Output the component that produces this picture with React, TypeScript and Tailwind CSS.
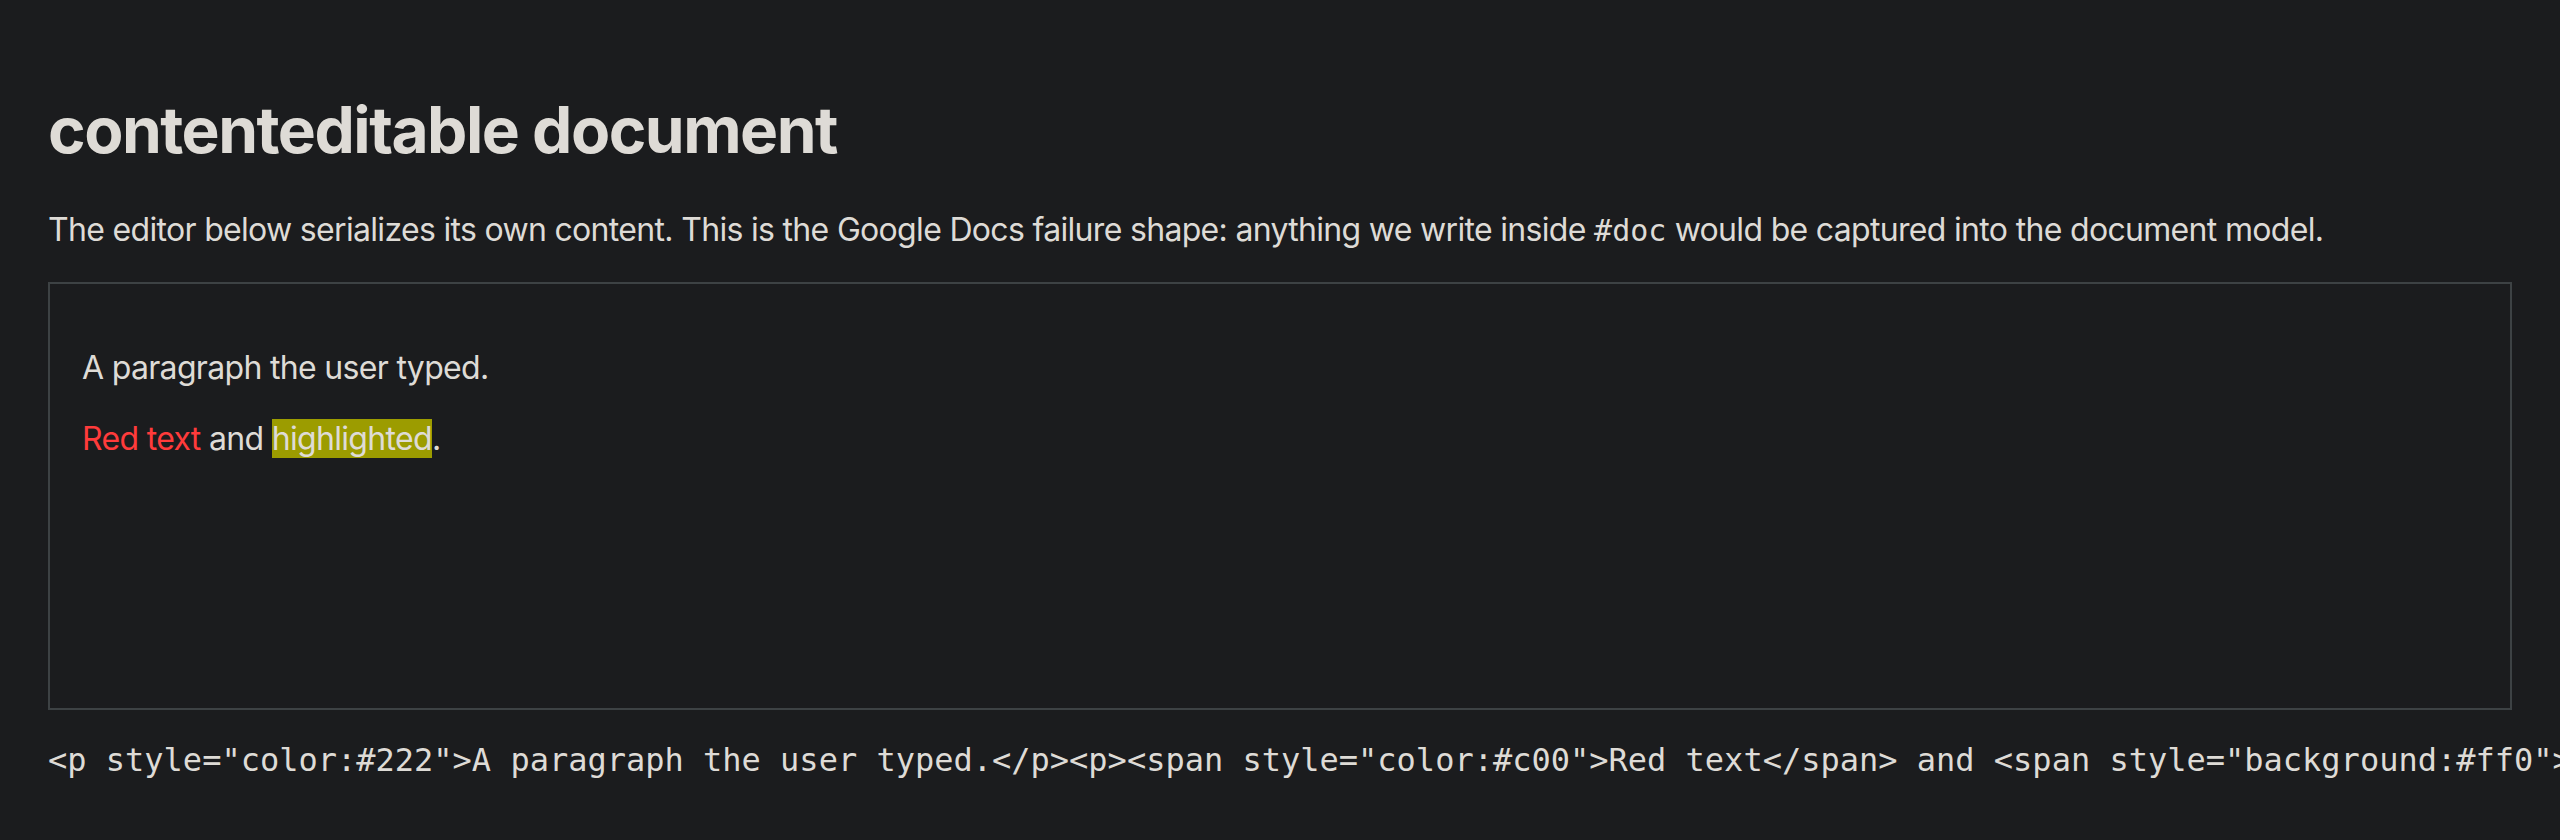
import React from "react";

export default function App() {
  return (
    <div
      className="min-h-screen w-full overflow-hidden bg-[#1b1c1e] px-[48px] pt-[91px] text-[#dedbd6]"
      style={{ fontFamily: "Inter, 'Noto Sans', sans-serif" }}
    >
      <h1 className="text-[64px] font-bold leading-[77px] tracking-[-1.5px]">contenteditable document</h1>
      <p className="mt-[42px] text-[32px] leading-[39px] tracking-[-0.68px]">
        The editor below serializes its own content. This is the Google Docs failure shape: anything we write inside{" "}
        <code className="font-['DejaVu_Sans_Mono',monospace] text-[30px] tracking-normal">#doc</code> would be captured
        into the document model.
      </p>
      <div className="mt-[32px] h-[428px] border-2 border-[#3d4244] px-[32px] pt-[32px]">
        <p className="mt-[32px] text-[32px] leading-[39px] tracking-[-0.68px]">A paragraph the user typed.</p>
        <p className="mt-[32px] text-[32px] leading-[39px] tracking-[-0.68px]">
          <span className="text-[#ff3b3b]">Red text</span> and{" "}
          <span className="bg-[#9c9c00]">highlighted</span>.
        </p>
      </div>
      <pre className="mt-[32px] whitespace-pre font-['DejaVu_Sans_Mono',monospace] text-[32px] leading-[37px]">
        {'<p style="color:#222">A paragraph the user typed.</p><p><span style="color:#c00">Red text</span> and <span style="background:#ff0">highlighted</span>.</p>'}
      </pre>
    </div>
  );
}
